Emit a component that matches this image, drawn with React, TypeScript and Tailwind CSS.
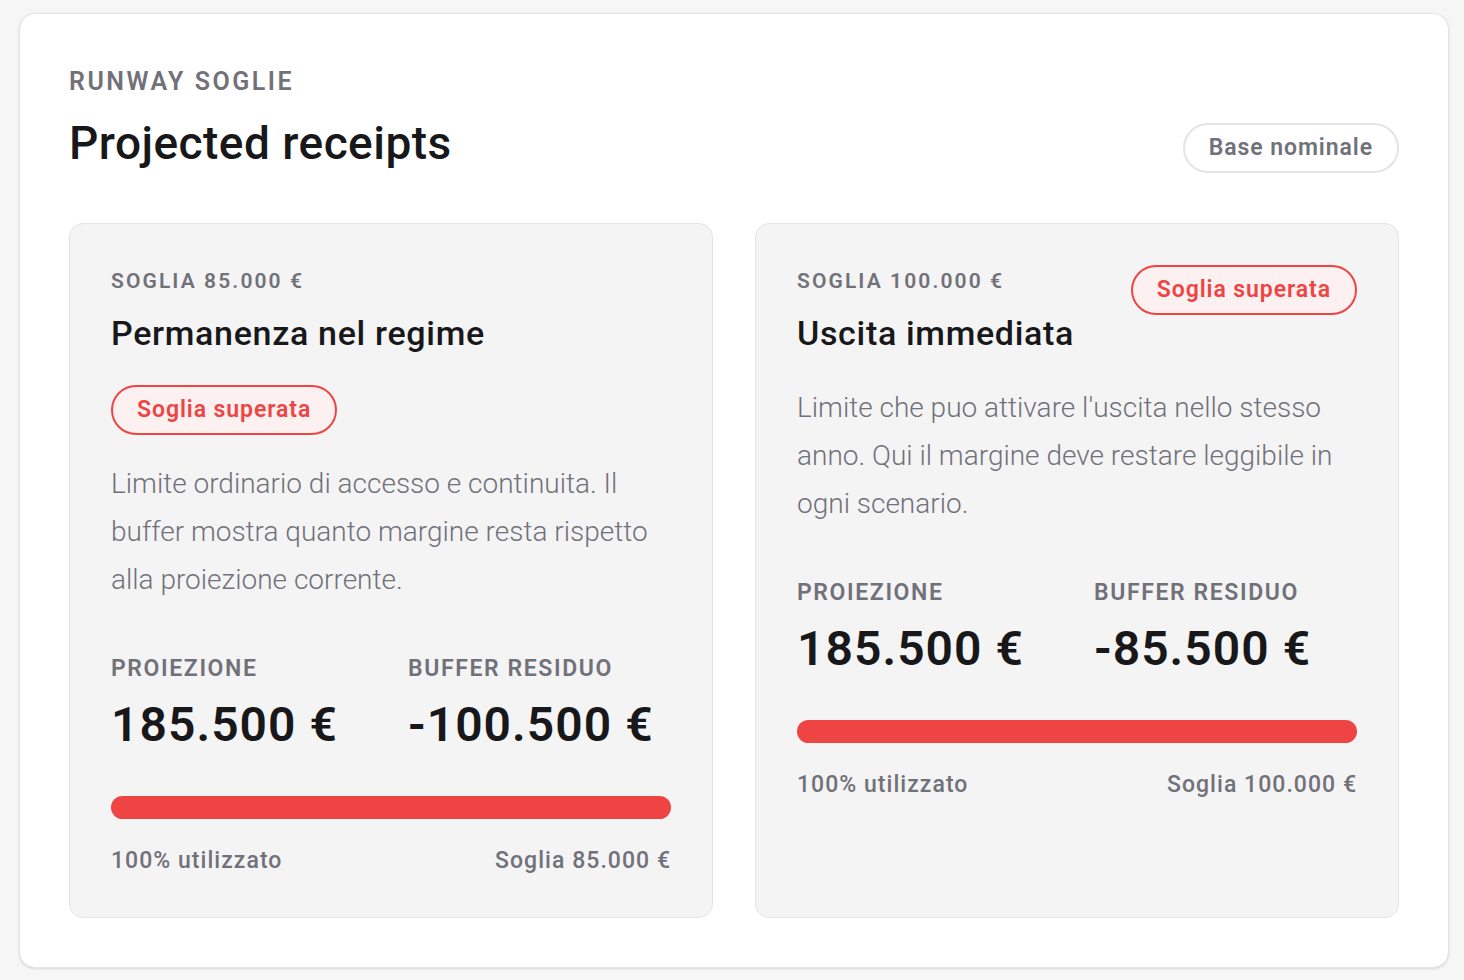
const font = { fontFamily: "Roboto, 'Liberation Sans', sans-serif" };

type Threshold = {
  eyebrow: string;
  title: string;
  description: string[];
  projection: string;
  buffer: string;
  footerRight: string;
  badgeInHeader: boolean;
};

const thresholds: Threshold[] = [
  {
    eyebrow: "Soglia 85.000 €",
    title: "Permanenza nel regime",
    description: [
      "Limite ordinario di accesso e continuita. Il",
      "buffer mostra quanto margine resta rispetto",
      "alla proiezione corrente.",
    ],
    projection: "185.500 €",
    buffer: "-100.500 €",
    footerRight: "Soglia 85.000 €",
    badgeInHeader: false,
  },
  {
    eyebrow: "Soglia 100.000 €",
    title: "Uscita immediata",
    description: [
      "Limite che puo attivare l'uscita nello stesso",
      "anno. Qui il margine deve restare leggibile in",
      "ogni scenario.",
    ],
    projection: "185.500 €",
    buffer: "-85.500 €",
    footerRight: "Soglia 100.000 €",
    badgeInHeader: true,
  },
];

function Badge() {
  return (
    <span className="inline-flex h-[50px] items-center rounded-full border-2 border-[#ef4444] bg-[#fdf0f0] px-[24px] text-[23px] font-semibold tracking-[0.04em] text-[#ef4444]">
      Soglia superata
    </span>
  );
}

function ThresholdCard({ t }: { t: Threshold }) {
  return (
    <div className="flex flex-col rounded-[14px] border border-[#e4e4e7] bg-[#f4f4f4] px-[41px] pt-[43px] pb-[43px]">
      {/* Header */}
      <div className="flex items-start justify-between">
        <div>
          <p className="text-[21px] leading-[28px] font-semibold tracking-[0.1em] text-[#71717a] uppercase">
            {t.eyebrow}
          </p>
          <h3 className="mt-[17px] text-[34px] leading-[42px] font-medium tracking-[0.02em] text-[#18181b]">
            {t.title}
          </h3>
        </div>
        {t.badgeInHeader && (
          <div className="-mt-[2px]">
            <Badge />
          </div>
        )}
      </div>

      {!t.badgeInHeader && (
        <div className="mt-[31px]">
          <Badge />
        </div>
      )}

      <p
        className={`text-[28px] leading-[48px] font-light text-[#71717a] ${
          t.badgeInHeader ? "mt-[30px]" : "mt-[25px]"
        }`}
      >
        {t.description.map((line) => (
          <span key={line} className="block">
            {line}
          </span>
        ))}
      </p>

      {/* Metrics */}
      <div className="mt-[52px] grid grid-cols-2 gap-x-[34px]">
        <div>
          <p className="text-[23px] leading-[26px] font-semibold tracking-[0.07em] text-[#71717a] uppercase">
            Proiezione
          </p>
          <p className="mt-[17px] text-[48px] leading-[52px] font-semibold tracking-[0.022em] text-[#18181b]">
            {t.projection}
          </p>
        </div>
        <div>
          <p className="text-[23px] leading-[26px] font-semibold tracking-[0.07em] text-[#71717a] uppercase">
            Buffer residuo
          </p>
          <p className="mt-[17px] text-[48px] leading-[52px] font-semibold tracking-[0.022em] text-[#18181b]">
            {t.buffer}
          </p>
        </div>
      </div>

      {/* Progress */}
      <div className="mt-[45px] h-[23px] w-full rounded-full bg-[#ef4444]" />

      <div className="mt-[29px] flex justify-between text-[23px] leading-[26px] font-medium tracking-[0.045em] text-[#71717a]">
        <span>100% utilizzato</span>
        <span>{t.footerRight}</span>
      </div>
    </div>
  );
}

export default function App() {
  return (
    <div className="min-h-[980px] bg-[#f6f6f6] pt-[13px] pl-[19px]" style={font}>
      <div className="w-[1430px] rounded-[16px] border border-[#e4e4e7] bg-white px-[49px] pt-[54px] pb-[49px] shadow-sm">
        {/* Header */}
        <div className="flex items-end justify-between">
          <div>
            <p className="text-[25px] leading-[28px] font-semibold tracking-[0.1em] text-[#71717a] uppercase">
              Runway soglie
            </p>
            <h2 className="mt-[21px] text-[46px] leading-[52px] font-medium tracking-[0.01em] text-[#18181b]">
              Projected receipts
            </h2>
          </div>
          <button className="-mb-[4px] h-[50px] rounded-full border-2 border-[#e4e4e7] bg-white px-[24px] text-[23px] font-semibold tracking-[0.04em] text-[#71717a]">
            Base nominale
          </button>
        </div>

        {/* Cards */}
        <div className="mt-[54px] grid grid-cols-2 gap-[42px]">
          {thresholds.map((t) => (
            <ThresholdCard key={t.title} t={t} />
          ))}
        </div>
      </div>
    </div>
  );
}
